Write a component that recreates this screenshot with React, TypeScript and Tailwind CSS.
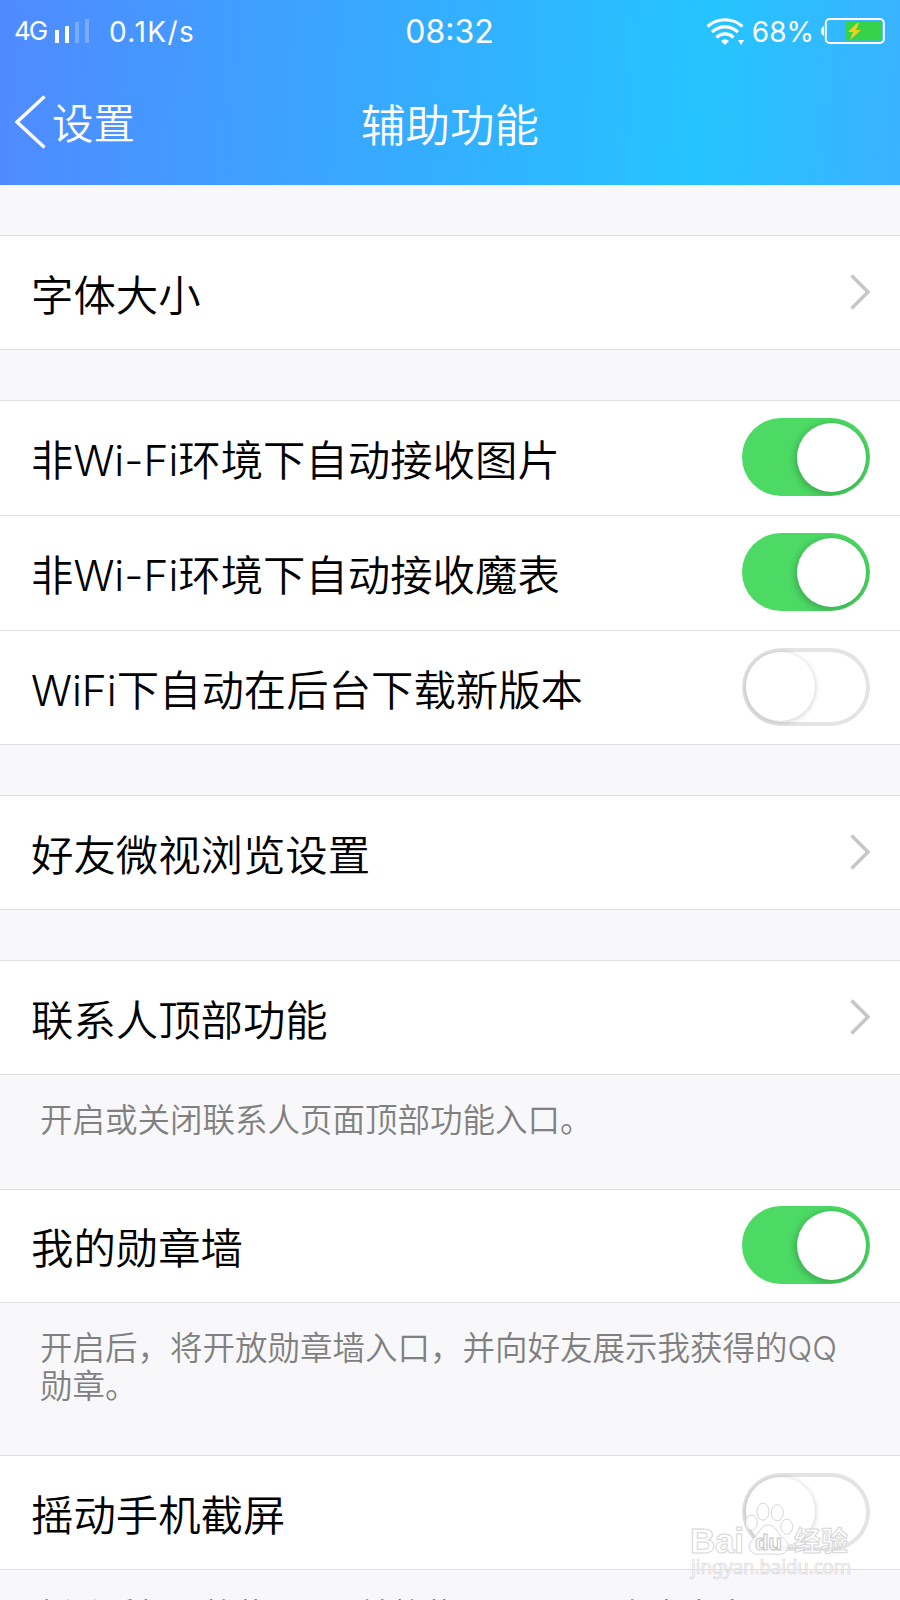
import { useState } from 'react';

type RowProps = { label: string; type: 'link' | 'switch'; on?: boolean; height?: string };
type Section = { rows: RowProps[]; note?: string };

const sections: Section[] = [
  { rows: [{ label: '字体大小', type: 'link' }] },
  {
    rows: [
      { label: '非Wi-Fi环境下自动接收图片', type: 'switch', on: true, height: 'h-[115px]' },
      { label: '非Wi-Fi环境下自动接收魔表', type: 'switch', on: true, height: 'h-[115px]' },
      { label: 'WiFi下自动在后台下载新版本', type: 'switch' },
    ],
  },
  { rows: [{ label: '好友微视浏览设置', type: 'link' }] },
  { rows: [{ label: '联系人顶部功能', type: 'link' }], note: '开启或关闭联系人页面顶部功能入口。' },
  {
    rows: [{ label: '我的勋章墙', type: 'switch', on: true, height: 'h-[112px]' }],
    note: '开启后，将开放勋章墙入口，并向好友展示我获得的QQ勋章。',
  },
  { rows: [{ label: '摇动手机截屏', type: 'switch' }], note: '摇动手机，将截下QQ 并将截屏画面可以在文字中QQ' },
];

// gap or note under each section, in order
const footHeights = ['h-[50px]', 'h-[50px]', 'h-[50px]', 'h-[114px]', 'h-[152px]', 'h-[70px]'];

function Switch({ initial = false }: { initial?: boolean }) {
  const [on, setOn] = useState(initial);
  return (
    <button
      role="switch"
      aria-checked={on}
      onClick={() => setOn(!on)}
      className={
        on
          ? 'mb-[2px] flex h-[78px] w-32 shrink-0 items-center justify-end overflow-hidden rounded-full bg-[#4cd964] pr-1'
          : 'mb-[2px] flex h-[78px] w-32 shrink-0 items-center overflow-hidden rounded-full bg-white pl-1 shadow-[inset_0_0_0_4px_#e4e4e4]'
      }
    >
      <span
        className={
          on
            ? 'size-[69px] rounded-full bg-white shadow-[-1px_2px_7px_1px_rgba(0,0,0,0.22)]'
            : 'size-[69px] rounded-full bg-white shadow-[0_1px_5px_1px_rgba(0,0,0,0.16)]'
        }
      />
    </button>
  );
}

function Row({ label, type, on, height = 'h-[113px]' }: RowProps) {
  return (
    <div className={`${height} flex items-center justify-between pr-[30px] pl-[31px]`}>
      <span className="pt-[7px] text-[42.4px] leading-none font-[350] whitespace-nowrap text-black">{label}</span>
      {type === 'switch' ? (
        <Switch initial={on} />
      ) : (
        <svg className="mb-[2px] h-9 w-5" viewBox="0 0 20 36" fill="none" stroke="#c7c7c7" strokeWidth="3.6">
          <path d="M1.5 1.5 18 18 1.5 34.5" />
        </svg>
      )}
    </div>
  );
}

function StatusBar() {
  return (
    <div className="grid h-16 grid-cols-3 items-center pr-[15px] pl-[14px]">
      <div className="flex items-center">
        <span className="w-8 pb-1 text-[26px] tracking-[-2px]">4G</span>
        <svg className="ml-[9px] h-[26px] w-9" viewBox="0 0 36 26" fill="#fff">
          <rect x="0" y="11" width="4" height="13" />
          <rect x="10" y="7" width="4" height="17" />
          <rect x="20" y="3" width="4" height="21" opacity=".25" />
          <rect x="30" y="-1" width="4" height="25" opacity=".25" />
        </svg>
        <span className="ml-[18px] text-[28px] tracking-[1.4px]">0.1K/s</span>
      </div>
      <span className="text-center text-[32px]">08:32</span>
      <div className="flex items-center justify-end pb-[2px]">
        <svg className="h-7 w-10" viewBox="0 0 40 28" fill="none" stroke="#fff" strokeWidth="3.2">
          <path d="M1.5 9.5a26 26 0 0 1 35 0" />
          <path d="M6 15a19 19 0 0 1 26 0" />
          <path d="M10.5 20.5a12 12 0 0 1 17 0" />
          <path d="M15 24q4-3.500 8 0L19 28z" fill="#fff" stroke="none" />
          <path d="M32 23h6l-3 5z" fill="#fff" stroke="none" />
        </svg>
        <span className="ml-[6px] pt-[2px] text-[28px]">68%</span>
        <svg className="ml-[7px] h-[26px] w-16" viewBox="0 0 64 26" fill="none">
          <path d="M3 8v10q-3-1-3-5t3-5z" fill="#fff" />
          <rect x="4.8" y="1" width="58" height="24" rx="4" stroke="#fff" strokeWidth="2" />
          <rect x="24" y="3.5" width="37" height="19" fill="#35d24a" />
          <path d="M36 5 27 14h5l-3 8 11-10h-5l3-7z" fill="#f2cf1d" />
        </svg>
      </div>
    </div>
  );
}

function Watermark() {
  return (
    <svg
      className="pointer-events-none absolute top-[1498px] left-[686px] h-[84px] w-[180px]"
      viewBox="0 0 180 84"
      fill="#fff"
      fillOpacity=".75"
      stroke="#d6d6d6"
      strokeWidth="1"
    >
      <ellipse cx="65.3" cy="24.7" rx="6" ry="7.5" />
      <ellipse cx="77" cy="13.7" rx="6" ry="8.5" />
      <ellipse cx="91.3" cy="14.7" rx="6" ry="8" />
      <ellipse cx="100.7" cy="28.7" rx="6" ry="7.5" />
      <path d="M82 27c7 0 9 7 14 12 5 4 8 8 5 13-3 6-10 4-19 4s-14 2-18-4c-2-5 1-9 5-13 5-5 6-12 13-12z" />
      <text x="4" y="54.5" fontSize="35" fontWeight="700" fontFamily="Liberation Sans" textLength="54">Bai</text>
      <text x="69" y="51.5" fontSize="22" fontWeight="700" fontFamily="Liberation Sans" stroke="#c4c4c4">du</text>
      <text x="108" y="52.5" fontSize="27" fontWeight="700" fontFamily="Noto Sans CJK SC">经验</text>
      <text x="5" y="76" fontSize="19" fontFamily="Noto Sans" textLength="160" lengthAdjust="spacingAndGlyphs" strokeWidth=".7">
        jingyan.baidu.com
      </text>
    </svg>
  );
}

export default function App() {
  return (
    <div className="relative h-[1600px] w-[900px] overflow-hidden bg-[#f8f8fb] font-['Inter','Noto_Sans_CJK_SC',sans-serif]">
      <header className="h-[185px] bg-[linear-gradient(94deg,#508aff_0%,#3ba4ff_35%,#25c4ff_78%,#3bb2ff_100%)] text-white">
        <StatusBar />
        <div className="grid h-[121px] grid-cols-3 items-center px-[15px]">
          <div className="flex items-center pb-[5px]">
            <svg className="h-[54px] w-[31px]" viewBox="0 0 31 54" fill="none" stroke="#fff" strokeWidth="3.4">
              <path d="M29.5 1.5 2 27 29.5 52.5" />
            </svg>
            <span className="ml-[6px] pt-[6px] text-[41.5px] leading-none font-[350]">设置</span>
          </div>
          <h1 className="pt-[3px] text-center text-[44.5px] leading-none font-[350] whitespace-nowrap">辅助功能</h1>
        </div>
      </header>

      <main className="pt-[50px]">
        {sections.map((section, i) => (
          <section key={section.rows[0].label}>
            <div className="divide-y divide-[#dedee0] border-y border-[#dedee0] bg-white">
              {section.rows.map((row) => (
                <Row key={row.label} {...row} />
              ))}
            </div>
            <div className={footHeights[i]}>
              {section.note && (
                <p className="px-10 pt-[27px] text-[32.5px] leading-[38px] font-[350] text-[#808080]">{section.note}</p>
              )}
            </div>
          </section>
        ))}
      </main>

      <Watermark />
    </div>
  );
}
